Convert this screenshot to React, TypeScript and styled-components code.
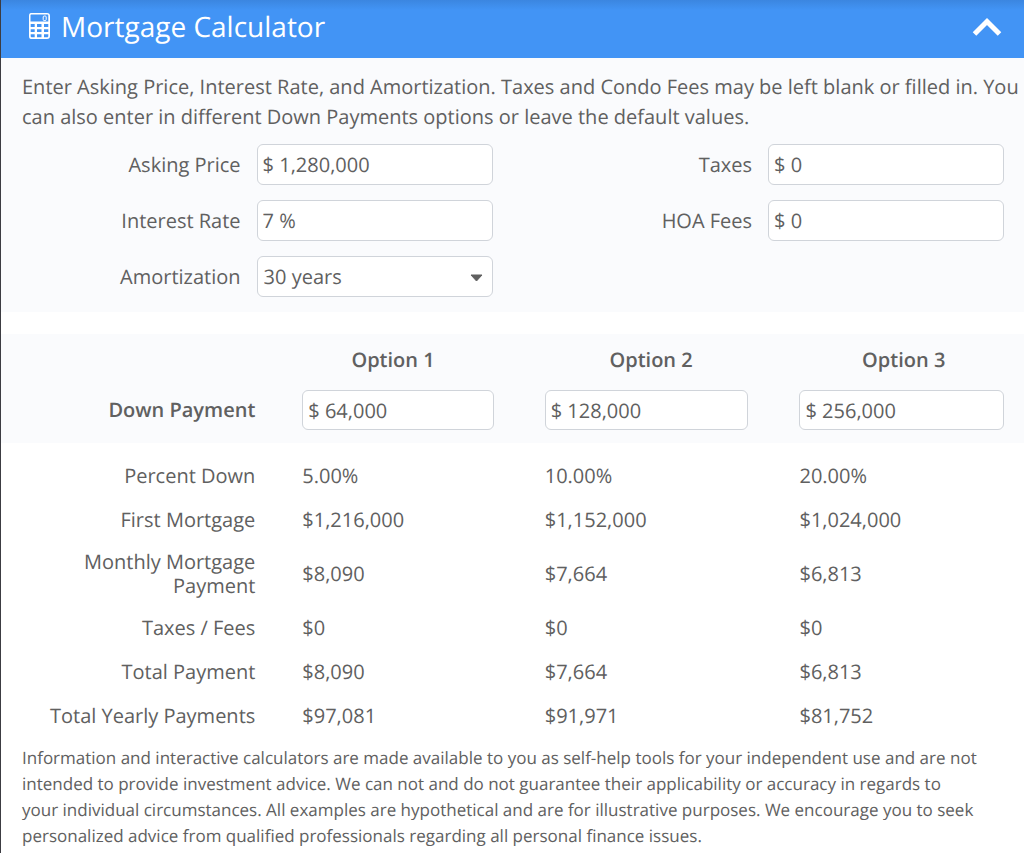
import React, { useState } from "react";
import styled, { createGlobalStyle } from "styled-components";

const GlobalStyle = createGlobalStyle`
  *, *::before, *::after { box-sizing: border-box; }
  body {
    margin: 0;
    background: #ffffff;
    color: #606060;
    font-family: "Open Sans", "Noto Sans", sans-serif;
    font-size: 20px;
    line-height: 30px;
    text-rendering: geometricPrecision;
  }
`;

const Panel = styled.main`
  min-height: 100vh;
  border-left: 1px solid #3c3c42;
`;

const Header = styled.header`
  display: flex;
  align-items: center;
  height: 58px;
  padding: 0 22px 4px 26px;
  color: #ffffff;
  background: linear-gradient(#3b86e0, #4294f5 10px);
`;

const Title = styled.h1`
  flex: 1;
  margin: 0 0 0 10px;
  font-size: 28px;
  font-weight: 400;
  line-height: 40px;
`;

const CollapseButton = styled.button`
  display: flex;
  padding: 0;
  border: 0;
  background: none;
  color: inherit;
  cursor: pointer;
`;

const FormSection = styled.section`
  padding: 14px 0 15px;
  background: #fafbfd;
`;

const Intro = styled.p`
  margin: 0 0 12px;
  padding-left: 21px;
`;

const FormColumns = styled.div`
  display: grid;
  grid-template-columns: 1fr 1fr;
  align-items: start;
`;

const FieldStack = styled.div`
  display: grid;
  row-gap: 15px;
  padding-right: 20px;
`;

const Field = styled.div`
  display: grid;
  grid-template-columns: 1fr 48%;
  column-gap: 16px;
  align-items: center;
`;

const FieldLabel = styled.label`
  text-align: right;
`;

const TextInput = styled.input<{ $height?: number }>`
  display: block;
  width: 100%;
  height: ${({ $height = 41 }) => $height}px;
  padding: 0 5px;
  border: 1px solid #d0d4da;
  border-radius: 6px;
  background: #ffffff;
  color: inherit;
  font: inherit;
  text-rendering: inherit;
`;

const SelectWrap = styled.div`
  position: relative;
`;

const Select = styled.select`
  display: block;
  width: 100%;
  height: 41px;
  padding: 0 32px 0 6px;
  border: 1px solid #d0d4da;
  border-radius: 6px;
  appearance: none;
  background: #ffffff;
  color: inherit;
  font: inherit;
  text-rendering: inherit;
`;

const Caret = styled.svg`
  position: absolute;
  right: 10px;
  top: 18px;
  pointer-events: none;
`;

const OptionsTable = styled.table`
  width: 100%;
  margin-top: 22px;
  table-layout: fixed;
  border-collapse: collapse;
`;

const TableHead = styled.thead`
  background: #fafbfd;
`;

const Column = styled.col<{ $share: number }>`
  width: ${({ $share }) => $share}%;
`;

const OptionHeading = styled.th<{ $right: number }>`
  padding: 11px ${({ $right }) => $right}px 15px 21px;
  font-weight: 600;
  text-align: center;
`;

const RowLabel = styled.th<{ $strong?: boolean }>`
  padding: 8px 26px 8px 40px;
  font-weight: ${({ $strong }) => ($strong ? 600 : 400)};
  line-height: 24px;
  text-align: right;
`;

const CornerCell = styled.td`
  padding: 0;
`;

const InputRow = styled.tr`
  & > th { padding-top: 0; padding-bottom: 13px; }
`;

const InputCell = styled.td`
  padding: 0 30px 13px 21px;
  &:last-child { padding-right: 20px; }
`;

const Results = styled.tbody`
  &::before {
    content: "";
    display: block;
    height: 11px;
  }
`;

const ValueCell = styled.td`
  padding: 8px 21px;
  line-height: 28px;
`;

const Disclaimer = styled.p`
  margin: 0;
  padding: 7px 10px 3px 21px;
  font-size: 17px;
  line-height: 26px;
`;

const CalculatorIcon = () => (
  <svg width="24" height="30" viewBox="0 0 24 30" aria-hidden="true">
    <path
      fill="currentColor"
      fillRule="evenodd"
      d="M4 1H20Q23 1 23 4V24Q23 27 20 27H4Q2 27 2 24V4Q2 1 4 1Z
        M3.500 3.200V9.500H21.300V3.200Q21.300 2.500 20.600 2.500H4.200Q3.500 2.500 3.500 3.200Z
        M3.700 12H7.700V15H3.700Z M10 12H14.500V15H10Z M17 12H21.300V15H17Z
        M3.700 17.200H7.700V20H3.700Z M10 17.200H14.500V20H10Z M17 17.200H21.300V20H17Z
        M3.700 22.200H7.700V25.300H4.400L3.700 24.600Z M10 22.200H14.500V25.300H10Z M17 22.200H21.300V24.600L20.600 25.300H17Z"
    />
    <rect x="16.200" y="4" width="3" height="4.500" rx="1" fill="none" stroke="currentColor" strokeWidth="1" />
  </svg>
);

const ChevronUpIcon = () => (
  <svg width="30" height="20" viewBox="0 0 30 20" aria-hidden="true">
    <path d="M2.500 17L15 4.500L27.500 17" fill="none" stroke="currentColor" strokeWidth="5" />
  </svg>
);

const toNumber = (text: string) => Number(text.replace(/[^0-9.]/g, "")) || 0;
const toDollars = (value: number) => "$" + Math.round(value).toLocaleString("en-US");

interface Quote {
  percent: number;
  mortgage: number;
  monthly: number;
  fees: number;
}

const resultRows: { label: string; value: (quote: Quote) => string }[] = [
  { label: "Percent Down", value: (q) => q.percent.toFixed(2) + "%" },
  { label: "First Mortgage", value: (q) => toDollars(q.mortgage) },
  { label: "Monthly Mortgage Payment", value: (q) => toDollars(q.monthly) },
  { label: "Taxes / Fees", value: (q) => toDollars(q.fees) },
  { label: "Total Payment", value: (q) => toDollars(q.monthly + q.fees) },
  { label: "Total Yearly Payments", value: (q) => toDollars((q.monthly + q.fees) * 12) },
];

export default function App() {
  const [open, setOpen] = useState(true);
  const [price, setPrice] = useState("$ 1,280,000");
  const [rate, setRate] = useState("7 %");
  const [years, setYears] = useState("30");
  const [taxes, setTaxes] = useState("$ 0");
  const [hoa, setHoa] = useState("$ 0");
  const [downs, setDowns] = useState(["$ 64,000", "$ 128,000", "$ 256,000"]);

  const quotes: Quote[] = downs.map((down) => {
    const total = toNumber(price);
    const mortgage = Math.max(total - toNumber(down), 0);
    const monthlyRate = toNumber(rate) / 1200;
    const months = Number(years) * 12;
    const monthly = monthlyRate
      ? (mortgage * monthlyRate) / (1 - Math.pow(1 + monthlyRate, -months))
      : mortgage / months;
    return {
      percent: total ? (toNumber(down) / total) * 100 : 0,
      mortgage,
      monthly,
      fees: toNumber(taxes) / 12 + toNumber(hoa),
    };
  });

  const headingPadding = [40, 21, 16];

  return (
    <>
      <GlobalStyle />
      <Panel>
        <Header>
          <CalculatorIcon />
          <Title>Mortgage Calculator</Title>
          <CollapseButton
            type="button"
            aria-label="Toggle calculator"
            aria-expanded={open}
            onClick={() => setOpen(!open)}
          >
            <ChevronUpIcon />
          </CollapseButton>
        </Header>
        {open && (
          <>
            <FormSection>
              <Intro>
                Enter Asking Price, Interest Rate, and Amortization. Taxes and Condo Fees may be left
                blank or filled in. You can also enter in different Down Payments options or leave the
                default values.
              </Intro>
              <FormColumns>
                <FieldStack>
                  <Field>
                    <FieldLabel htmlFor="price">Asking Price</FieldLabel>
                    <TextInput id="price" value={price} onChange={(e) => setPrice(e.target.value)} />
                  </Field>
                  <Field>
                    <FieldLabel htmlFor="rate">Interest Rate</FieldLabel>
                    <TextInput id="rate" value={rate} onChange={(e) => setRate(e.target.value)} />
                  </Field>
                  <Field>
                    <FieldLabel htmlFor="years">Amortization</FieldLabel>
                    <SelectWrap>
                      <Select id="years" value={years} onChange={(e) => setYears(e.target.value)}>
                        <option value="15">15 years</option>
                        <option value="20">20 years</option>
                        <option value="25">25 years</option>
                        <option value="30">30 years</option>
                      </Select>
                      <Caret width="13" height="8" viewBox="0 0 13 8" aria-hidden="true">
                        <path d="M1 1H12L6.500 7Z" fill="#606060" stroke="#606060" strokeLinejoin="round" />
                      </Caret>
                    </SelectWrap>
                  </Field>
                </FieldStack>
                <FieldStack>
                  <Field>
                    <FieldLabel htmlFor="taxes">Taxes</FieldLabel>
                    <TextInput id="taxes" value={taxes} onChange={(e) => setTaxes(e.target.value)} />
                  </Field>
                  <Field>
                    <FieldLabel htmlFor="hoa">HOA Fees</FieldLabel>
                    <TextInput id="hoa" value={hoa} onChange={(e) => setHoa(e.target.value)} />
                  </Field>
                </FieldStack>
              </FormColumns>
            </FormSection>
            <OptionsTable>
              <colgroup>
                <Column $share={27.4} />
                <Column $share={23.7} />
                <Column $share={24.9} />
                <Column $share={24} />
              </colgroup>
              <TableHead>
                <tr>
                  <CornerCell />
                  {headingPadding.map((right, i) => (
                    <OptionHeading key={i} scope="col" $right={right}>
                      Option {i + 1}
                    </OptionHeading>
                  ))}
                </tr>
                <InputRow>
                  <RowLabel scope="row" $strong>
                    Down Payment
                  </RowLabel>
                  {downs.map((down, i) => (
                    <InputCell key={i}>
                      <TextInput
                        $height={40}
                        aria-label={`Down payment, option ${i + 1}`}
                        value={down}
                        onChange={(e) =>
                          setDowns(downs.map((d, j) => (j === i ? e.target.value : d)))
                        }
                      />
                    </InputCell>
                  ))}
                </InputRow>
              </TableHead>
              <Results>
                {resultRows.map(({ label, value }) => (
                  <tr key={label}>
                    <RowLabel scope="row">{label}</RowLabel>
                    {quotes.map((quote, i) => (
                      <ValueCell key={i}>{value(quote)}</ValueCell>
                    ))}
                  </tr>
                ))}
              </Results>
            </OptionsTable>
            <Disclaimer>
              Information and interactive calculators are made available to you as self-help tools for
              your independent use and are not
              <br />
              intended to provide investment advice. We can not and do not guarantee their applicability
              or accuracy in regards to
              <br />
              your individual circumstances. All examples are hypothetical and are for illustrative
              purposes. We encourage you to seek
              <br />
              personalized advice from qualified professionals regarding all personal finance issues.
            </Disclaimer>
          </>
        )}
      </Panel>
    </>
  );
}
